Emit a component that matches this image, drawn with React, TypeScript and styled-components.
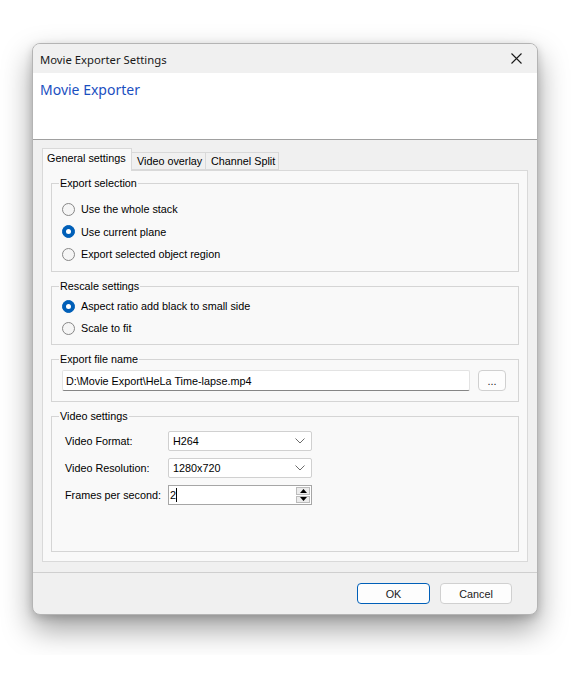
import React from "react";
import styled, { createGlobalStyle } from "styled-components";

const GlobalStyle = createGlobalStyle`
  html, body { margin: 0; padding: 0; background: #ffffff; }
  body { font-family: "Liberation Sans", Arial, sans-serif; font-size: 10.8px; color: #000; }
  #root { padding-bottom: 40px; }
  * { box-sizing: border-box; }
`;

const Window = styled.div`
  width: 506px;
  height: 572px;
  margin: 43px 0 0 32px;
  border: 1px solid #b4b4b4;
  border-radius: 8px;
  overflow: hidden;
  background: #f0f0f0;
  box-shadow: 0 14px 30px rgba(0, 0, 0, 0.38), 0 3px 8px rgba(0, 0, 0, 0.16);
  display: flex;
  flex-direction: column;
`;

const TitleBar = styled.div`
  height: 29px;
  flex: none;
  display: flex;
  align-items: center;
  justify-content: space-between;
  padding-left: 7px;
  background: #f0f0f0;
`;

const TitleText = styled.span`
  font-family: "Noto Sans", "Open Sans", sans-serif;
  font-size: 11.3px;
  color: #1a1a1a;
  margin-top: 1px;
`;

const CloseButton = styled.div`
  width: 46px;
  height: 29px;
  display: flex;
  align-items: center;
  justify-content: center;
  margin-right: -2px;
`;

const Header = styled.div`
  height: 67px;
  flex: none;
  background: #ffffff;
  border-bottom: 1px solid #a0a0a0;
  padding: 7px 0 0 7px;
`;

const HeaderTitle = styled.div`
  font-family: "Noto Sans", "Open Sans", sans-serif;
  font-size: 14px;
  color: #1b4fbf;
`;

const Body = styled.div`
  flex: 1;
  padding: 8px 9px 10px 9px;
  display: flex;
  flex-direction: column;
`;

const TabStrip = styled.div`
  height: 22px;
  display: flex;
  align-items: flex-end;
  position: relative;
  z-index: 1;
`;

const Tab = styled.div<{ $active?: boolean; $width: number }>`
  width: ${(p) => p.$width}px;
  height: ${(p) => (p.$active ? 23 : 18)}px;
  margin-bottom: ${(p) => (p.$active ? -1 : 0)}px;
  margin-left: ${(p) => (p.$active ? 0 : -1)}px;
  background: ${(p) => (p.$active ? "#f9f9f9" : "#f0f0f0")};
  border: 1px solid #d9d9d9;
  border-bottom: ${(p) => (p.$active ? "none" : "1px solid #d9d9d9")};
  display: flex;
  align-items: ${(p) => (p.$active ? "flex-start" : "center")};
  padding-top: ${(p) => (p.$active ? 3 : 0)}px;
  padding-left: ${(p) => (p.$active ? 4 : 5)}px;
  font-size: 10.8px;
  white-space: nowrap;
`;

const Panel = styled.div`
  height: 392px;
  background: #f9f9f9;
  border: 1px solid #d9d9d9;
  padding: 6px 8px 0 8px;
  display: flex;
  flex-direction: column;
  gap: 8px;
`;

const GroupBox = styled.fieldset<{ $height: number; $padTop: number; $padLeft?: number }>`
  margin: 0;
  height: ${(p) => p.$height}px;
  border: 1px solid #d5d5d5;
  border-radius: 0;
  padding: ${(p) => p.$padTop}px 10px 0 ${(p) => p.$padLeft ?? 10}px;
  min-width: 0;
`;

const Legend = styled.legend`
  font-size: 10.8px;
  padding: 0 1px;
  margin-left: -3px;
  line-height: 13px;
`;

const RadioList = styled.div<{ $row: number }>`
  display: flex;
  flex-direction: column;
  & > * { height: ${(p) => p.$row}px; }
`;

const RadioRow = styled.label`
  display: flex;
  align-items: center;
  gap: 6px;
  font-size: 10.8px;
`;

const RadioCircle = styled.span<{ $checked?: boolean }>`
  width: 13px;
  height: 13px;
  border-radius: 50%;
  flex: none;
  display: flex;
  align-items: center;
  justify-content: center;
  background: ${(p) => (p.$checked ? "#005fb8" : "#f5f5f5")};
  border: 1px solid ${(p) => (p.$checked ? "#005fb8" : "#878787")};
  &::after {
    content: "";
    display: ${(p) => (p.$checked ? "block" : "none")};
    width: 5px;
    height: 5px;
    border-radius: 50%;
    background: #ffffff;
  }
`;

const FileRow = styled.div`
  display: flex;
  align-items: center;
  gap: 8px;
`;

const TextInput = styled.div`
  width: 408px;
  height: 21px;
  background: #ffffff;
  border: 1px solid #e3e3e3;
  border-bottom: 1px solid #868686;
  border-radius: 2px;
  display: flex;
  align-items: center;
  padding-left: 3px;
  font-size: 10.8px;
`;

const SmallButton = styled.div<{ $primary?: boolean; $width: number }>`
  width: ${(p) => p.$width}px;
  height: 21px;
  border: 1px solid ${(p) => (p.$primary ? "#005fb8" : "#d0d0d0")};
  border-radius: 4px;
  background: #fdfdfd;
  display: flex;
  align-items: center;
  justify-content: center;
  font-size: 10.8px;
  color: #1a1a1a;
`;

const FieldGrid = styled.div`
  display: grid;
  grid-template-columns: 106px 144px;
  row-gap: 7px;
  align-items: center;
`;

const FieldLabel = styled.span`
  font-size: 10.8px;
  padding-left: 3px;
  white-space: nowrap;
`;

const Combo = styled.div`
  height: 20px;
  background: #ffffff;
  border: 1px solid #d0d0d0;
  border-radius: 2px;
  display: flex;
  align-items: center;
  justify-content: space-between;
  padding: 0 6px 0 4px;
  font-size: 10.8px;
`;

const Spin = styled.div`
  height: 20px;
  background: #ffffff;
  border: 1px solid #a6a6a6;
  display: flex;
  align-items: stretch;
  font-size: 10.8px;
`;

const SpinValue = styled.div`
  flex: 1;
  display: flex;
  align-items: center;
  padding-left: 1px;
`;

const Caret = styled.span`
  display: inline-block;
  width: 1px;
  height: 14px;
  background: #000;
`;

const SpinButtons = styled.div`
  width: 15px;
  display: flex;
  flex-direction: column;
  padding: 1px 1px 1px 0;
  gap: 1px;
`;

const SpinButton = styled.div`
  flex: 1;
  background: #ececec;
  border: 1px solid #bcbcbc;
  display: flex;
  align-items: center;
  justify-content: center;
`;

const Footer = styled.div`
  height: 42px;
  flex: none;
  border-top: 1px solid #cfcfcf;
  display: flex;
  align-items: flex-start;
  justify-content: flex-end;
  gap: 10px;
  padding: 10px 25px 0 0;
`;

const Chevron = () => (
  <svg width="10" height="6" viewBox="0 0 10 6">
    <polyline points="0.5,0.5 5,5 9.5,0.5" fill="none" stroke="#6b6b6b" strokeWidth="1" />
  </svg>
);

const Triangle = ({ up }: { up?: boolean }) => (
  <svg width="7" height="4" viewBox="0 0 7 4">
    <polygon points={up ? "3.5,0 7,4 0,4" : "0,0 7,0 3.5,4"} fill="#000" />
  </svg>
);

export default function App() {
  return (
    <>
      <GlobalStyle />
      <Window>
        <TitleBar>
          <TitleText>Movie Exporter Settings</TitleText>
          <CloseButton>
            <svg width="11" height="11" viewBox="0 0 11 11">
              <path d="M0.5 0.5 L10.5 10.5 M10.5 0.5 L0.5 10.5" stroke="#1a1a1a" strokeWidth="1.1" />
            </svg>
          </CloseButton>
        </TitleBar>
        <Header>
          <HeaderTitle>Movie Exporter</HeaderTitle>
        </Header>
        <Body>
          <TabStrip>
            <Tab $active $width={90}>General settings</Tab>
            <Tab $width={75}>Video overlay</Tab>
            <Tab $width={74}>Channel Split</Tab>
          </TabStrip>
          <Panel>
            <GroupBox $height={95} $padTop={8}>
              <Legend>Export selection</Legend>
              <RadioList $row={22.5}>
                <RadioRow><RadioCircle />Use the whole stack</RadioRow>
                <RadioRow><RadioCircle $checked />Use current plane</RadioRow>
                <RadioRow><RadioCircle />Export selected object region</RadioRow>
              </RadioList>
            </GroupBox>
            <GroupBox $height={65} $padTop={2}>
              <Legend>Rescale settings</Legend>
              <RadioList $row={22}>
                <RadioRow><RadioCircle $checked />Aspect ratio add black to small side</RadioRow>
                <RadioRow><RadioCircle />Scale to fit</RadioRow>
              </RadioList>
            </GroupBox>
            <GroupBox $height={49} $padTop={4}>
              <Legend>Export file name</Legend>
              <FileRow>
                <TextInput>D:\Movie Export\HeLa Time-lapse.mp4</TextInput>
                <SmallButton $width={28}>...</SmallButton>
              </FileRow>
            </GroupBox>
            <GroupBox $height={142} $padTop={8} $padLeft={10}>
              <Legend>Video settings</Legend>
              <FieldGrid>
                <FieldLabel>Video Format:</FieldLabel>
                <Combo>H264<Chevron /></Combo>
                <FieldLabel>Video Resolution:</FieldLabel>
                <Combo>1280x720<Chevron /></Combo>
                <FieldLabel>Frames per second:</FieldLabel>
                <Spin>
                  <SpinValue>2<Caret /></SpinValue>
                  <SpinButtons>
                    <SpinButton><Triangle up /></SpinButton>
                    <SpinButton><Triangle /></SpinButton>
                  </SpinButtons>
                </Spin>
              </FieldGrid>
            </GroupBox>
          </Panel>
        </Body>
        <Footer>
          <SmallButton $primary $width={73}>OK</SmallButton>
          <SmallButton $width={72}>Cancel</SmallButton>
        </Footer>
      </Window>
    </>
  );
}
